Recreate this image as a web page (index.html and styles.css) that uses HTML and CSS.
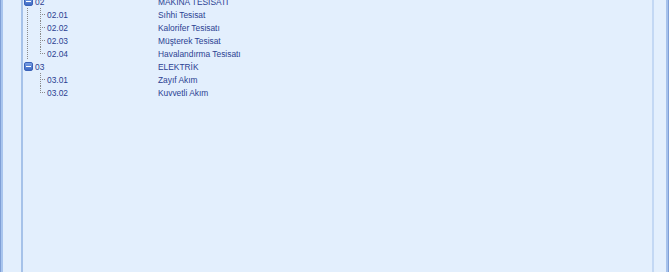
FILE: index.html
```html
<!DOCTYPE html>
<html>
<head>
<meta charset="utf-8">
<link rel="stylesheet" href="styles.css">
</head>
<body>
<div class="frame">
  <div class="side side-left"></div>
  <div class="content">
    <div class="tree">
      <div class="row root">
        <div class="prefix"><span class="exp"></span><span class="code">02</span></div>
        <div class="name">MAKİNA TESİSATI</div>
      </div>
      <div class="group has-line">
        <div class="row child">
          <div class="prefix"><span class="conn"></span><span class="code">02.01</span></div>
          <div class="name">Sıhhi Tesisat</div>
        </div>
        <div class="row child">
          <div class="prefix"><span class="conn"></span><span class="code">02.02</span></div>
          <div class="name">Kalorifer Tesisatı</div>
        </div>
        <div class="row child">
          <div class="prefix"><span class="conn"></span><span class="code">02.03</span></div>
          <div class="name">Müşterek Tesisat</div>
        </div>
        <div class="row child last">
          <div class="prefix"><span class="conn"></span><span class="code">02.04</span></div>
          <div class="name">Havalandırma Tesisatı</div>
        </div>
      </div>
      <div class="row root">
        <div class="prefix"><span class="exp"></span><span class="code">03</span></div>
        <div class="name">ELEKTRİK</div>
      </div>
      <div class="group">
        <div class="row child">
          <div class="prefix"><span class="conn"></span><span class="code">03.01</span></div>
          <div class="name">Zayıf Akım</div>
        </div>
        <div class="row child last">
          <div class="prefix"><span class="conn"></span><span class="code">03.02</span></div>
          <div class="name">Kuvvetli Akım</div>
        </div>
      </div>
    </div>
  </div>
  <div class="side side-right"></div>
</div>
</body>
</html>
```
FILE: styles.css
```css
html, body {
  margin: 0;
  padding: 0;
  height: 100%;
  overflow: hidden;
}
body {
  background: #e3effd;
  font-family: "Liberation Sans", Arial, sans-serif;
  font-size: 8.4px;
  color: #2b3f92;
}
.frame {
  display: flex;
  height: 272px;
  width: 669px;
  box-sizing: border-box;
  border-left: 1px solid #7f9fd6;
  border-right: 1px solid #7f9fd6;
}
.side {
  background: #e3effd;
}
.side-left {
  width: 18px;
  border-left: 2px solid #a9c5ee;
  border-right: 2px solid #a6c2e9;
}
.side-right {
  width: 12px;
  border-left: 2px solid #c3d8f4;
  border-right: 2px solid #a6c2ec;
}
.content {
  flex: 1;
  background: #e3effd;
  overflow: hidden;
}
.tree {
  margin-top: -5px;
}
.row {
  display: grid;
  grid-template-columns: 135px 1fr;
  height: 13px;
  align-items: center;
}
.child {
  grid-template-columns: 131px 1fr;
}
.prefix {
  display: flex;
  align-items: center;
  height: 13px;
}
.root .prefix {
  padding-left: 1px;
}
.exp {
  width: 9px;
  height: 9px;
  box-sizing: border-box;
  border-radius: 2px;
  background: linear-gradient(#7aa0e4, #3d69c4);
  border: 1px solid #3a62b8;
  position: relative;
  margin-right: 2px;
  flex: none;
}
.exp::after {
  content: "";
  position: absolute;
  left: 1px;
  right: 1px;
  top: 3px;
  height: 1px;
  background: #fff;
}
.group {
  margin-left: 4px;
}
.group.has-line {
  background-image: linear-gradient(#8a8a8a 50%, transparent 50%);
  background-size: 1px 2px;
  background-repeat: repeat-y;
  background-position: 0 0;
}
.child .prefix {
  padding-left: 13px;
}
.conn {
  width: 7px;
  height: 13px;
  position: relative;
  flex: none;
}
.conn::before {
  content: "";
  position: absolute;
  left: 0;
  top: 0;
  width: 1px;
  height: 13px;
  background-image: linear-gradient(#8a8a8a 50%, transparent 50%);
  background-size: 1px 2px;
}
.last .conn::before {
  height: 7px;
}
.conn::after {
  content: "";
  position: absolute;
  left: 0;
  top: 6px;
  width: 6px;
  height: 1px;
  background-image: linear-gradient(90deg, #8a8a8a 50%, transparent 50%);
  background-size: 2px 1px;
}
.code, .name {
  white-space: nowrap;
}
```
